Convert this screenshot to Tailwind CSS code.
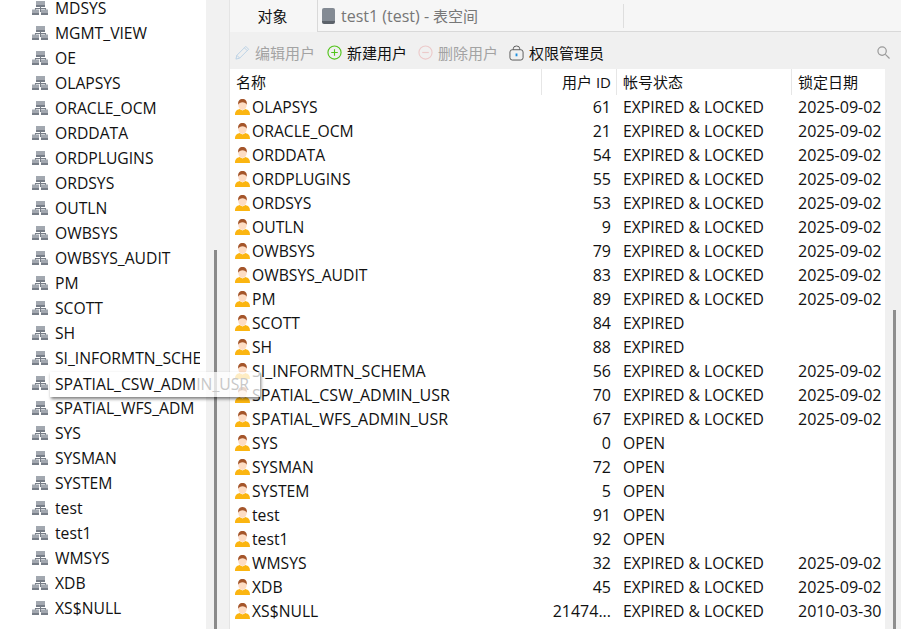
<!DOCTYPE html>
<html><head><meta charset="utf-8"><script src="https://cdn.jsdelivr.net/npm/@tailwindcss/browser@4"></script></head>
<body class="m-0 overflow-hidden">
<svg class="hidden"><defs>
<symbol id="db" viewBox="0 0 16 14"><rect x="4" y="0" width="9" height="3.500" fill="#a2a8b0"/><rect x="4" y="3.500" width="9" height="2.500" fill="#767d87"/><path d="M8.500 6v5M3.500 9V7.500h10V9" fill="none" stroke="#767d87" stroke-width="1.100"/><rect x="0" y="8.500" width="7" height="3" fill="#a2a8b0"/><rect x="0" y="11.500" width="7" height="2.500" fill="#767d87"/><rect x="9" y="8.500" width="7" height="3" fill="#a2a8b0"/><rect x="9" y="11.500" width="7" height="2.500" fill="#767d87"/></symbol>
<symbol id="usr" viewBox="0 0 15 16"><path d="M0 16c0-3.800 1.500-5 4.500-6l3 1.500 3-1.500c3 1 4.500 2.200 4.500 6z" fill="#fbb511"/><ellipse cx="7.500" cy="6" rx="4.200" ry="5" fill="#fddcc4"/><path d="M3.300 5.800C2.500 2 4.800 0 7.500 0s5 2 4.200 5.800C11.200 4 9.500 3.200 7.500 3.200S3.800 4 3.300 5.800z" fill="#a4552a"/></symbol>
</defs></svg>
<div class="relative flex h-[629px] w-[901px] overflow-hidden bg-white text-[15px] leading-[24px] text-[#111] font-['Open_Sans','Noto_Sans_CJK_SC',sans-serif]">
  <aside class="-mt-[5px] flex w-[206px] shrink-0 flex-col bg-white pl-[32px] text-[15.7px]">
    <div class="flex h-[25px] items-center gap-[7px]"><svg class="h-[14px] w-[16px]"><use href="#db"/></svg><span class="w-[145px] overflow-hidden whitespace-nowrap">MDSYS</span></div>
    <div class="flex h-[25px] items-center gap-[7px]"><svg class="h-[14px] w-[16px]"><use href="#db"/></svg><span class="w-[145px] overflow-hidden whitespace-nowrap">MGMT_VIEW</span></div>
    <div class="flex h-[25px] items-center gap-[7px]"><svg class="h-[14px] w-[16px]"><use href="#db"/></svg><span class="w-[145px] overflow-hidden whitespace-nowrap">OE</span></div>
    <div class="flex h-[25px] items-center gap-[7px]"><svg class="h-[14px] w-[16px]"><use href="#db"/></svg><span class="w-[145px] overflow-hidden whitespace-nowrap">OLAPSYS</span></div>
    <div class="flex h-[25px] items-center gap-[7px]"><svg class="h-[14px] w-[16px]"><use href="#db"/></svg><span class="w-[145px] overflow-hidden whitespace-nowrap">ORACLE_OCM</span></div>
    <div class="flex h-[25px] items-center gap-[7px]"><svg class="h-[14px] w-[16px]"><use href="#db"/></svg><span class="w-[145px] overflow-hidden whitespace-nowrap">ORDDATA</span></div>
    <div class="flex h-[25px] items-center gap-[7px]"><svg class="h-[14px] w-[16px]"><use href="#db"/></svg><span class="w-[145px] overflow-hidden whitespace-nowrap">ORDPLUGINS</span></div>
    <div class="flex h-[25px] items-center gap-[7px]"><svg class="h-[14px] w-[16px]"><use href="#db"/></svg><span class="w-[145px] overflow-hidden whitespace-nowrap">ORDSYS</span></div>
    <div class="flex h-[25px] items-center gap-[7px]"><svg class="h-[14px] w-[16px]"><use href="#db"/></svg><span class="w-[145px] overflow-hidden whitespace-nowrap">OUTLN</span></div>
    <div class="flex h-[25px] items-center gap-[7px]"><svg class="h-[14px] w-[16px]"><use href="#db"/></svg><span class="w-[145px] overflow-hidden whitespace-nowrap">OWBSYS</span></div>
    <div class="flex h-[25px] items-center gap-[7px]"><svg class="h-[14px] w-[16px]"><use href="#db"/></svg><span class="w-[145px] overflow-hidden whitespace-nowrap">OWBSYS_AUDIT</span></div>
    <div class="flex h-[25px] items-center gap-[7px]"><svg class="h-[14px] w-[16px]"><use href="#db"/></svg><span class="w-[145px] overflow-hidden whitespace-nowrap">PM</span></div>
    <div class="flex h-[25px] items-center gap-[7px]"><svg class="h-[14px] w-[16px]"><use href="#db"/></svg><span class="w-[145px] overflow-hidden whitespace-nowrap">SCOTT</span></div>
    <div class="flex h-[25px] items-center gap-[7px]"><svg class="h-[14px] w-[16px]"><use href="#db"/></svg><span class="w-[145px] overflow-hidden whitespace-nowrap">SH</span></div>
    <div class="flex h-[25px] items-center gap-[7px]"><svg class="h-[14px] w-[16px]"><use href="#db"/></svg><span class="w-[145px] overflow-hidden whitespace-nowrap">SI_INFORMTN_SCHE</span></div>
    <div class="flex h-[25px] items-center gap-[7px]"><svg class="h-[14px] w-[16px]"><use href="#db"/></svg><span class="w-[145px] overflow-hidden whitespace-nowrap">&nbsp;</span></div>
    <div class="flex h-[25px] items-center gap-[7px]"><svg class="h-[14px] w-[16px]"><use href="#db"/></svg><span class="w-[145px] overflow-hidden whitespace-nowrap">SPATIAL_WFS_ADM</span></div>
    <div class="flex h-[25px] items-center gap-[7px]"><svg class="h-[14px] w-[16px]"><use href="#db"/></svg><span class="w-[145px] overflow-hidden whitespace-nowrap">SYS</span></div>
    <div class="flex h-[25px] items-center gap-[7px]"><svg class="h-[14px] w-[16px]"><use href="#db"/></svg><span class="w-[145px] overflow-hidden whitespace-nowrap">SYSMAN</span></div>
    <div class="flex h-[25px] items-center gap-[7px]"><svg class="h-[14px] w-[16px]"><use href="#db"/></svg><span class="w-[145px] overflow-hidden whitespace-nowrap">SYSTEM</span></div>
    <div class="flex h-[25px] items-center gap-[7px]"><svg class="h-[14px] w-[16px]"><use href="#db"/></svg><span class="w-[145px] overflow-hidden whitespace-nowrap">test</span></div>
    <div class="flex h-[25px] items-center gap-[7px]"><svg class="h-[14px] w-[16px]"><use href="#db"/></svg><span class="w-[145px] overflow-hidden whitespace-nowrap">test1</span></div>
    <div class="flex h-[25px] items-center gap-[7px]"><svg class="h-[14px] w-[16px]"><use href="#db"/></svg><span class="w-[145px] overflow-hidden whitespace-nowrap">WMSYS</span></div>
    <div class="flex h-[25px] items-center gap-[7px]"><svg class="h-[14px] w-[16px]"><use href="#db"/></svg><span class="w-[145px] overflow-hidden whitespace-nowrap">XDB</span></div>
    <div class="flex h-[25px] items-center gap-[7px]"><svg class="h-[14px] w-[16px]"><use href="#db"/></svg><span class="w-[145px] overflow-hidden whitespace-nowrap">XS$NULL</span></div>
  </aside>
  <div class="flex w-[24px] shrink-0 flex-col items-center border-r border-[#e4e4e4] bg-[#f1f1f1] pt-[250px] pr-[4px]"><div class="h-full w-[3px] bg-[#8a8a8a]"></div></div>
  <main class="flex min-w-0 flex-1 flex-col bg-[#f0f0f0]">
    <div class="flex h-[32px] shrink-0 bg-[#f6f6f6]">
      <div class="flex h-[32px] w-[87px] shrink-0 items-center justify-center pr-[2px]">对象</div>
      <div class="flex h-[32px] flex-1 items-center border-b border-l border-[#d9d9d9] text-[#777]">
        <span class="ml-[4px] mr-[6px] h-[16px] w-[13px] rounded-[2px] bg-gradient-to-b from-[#838a93] from-80% to-[#5c626a] to-80%"></span><span class="text-[16px]">test1 (test) - </span><span class="ml-[4px]">表空间</span>
        <span class="ml-[145px] h-[24px] w-px bg-[#dedede]"></span>
      </div>
    </div>
    <div class="flex h-[37px] shrink-0 items-center pl-[5px] pr-[11px] pt-[4px]">
      <span class="flex items-center gap-[5px] text-[#a3a3a3]"><svg class="h-[15px] w-[15px]" viewBox="0 0 16 16" fill="none" stroke="#b9d0e4"><path d="M1 15l1-4L11.500 1.500l3 3L5 14z"/><path d="M2 11l3 3M10 3l3 3"/></svg>编辑用户</span>
      <span class="ml-[12px] flex items-center gap-[5px]"><svg class="h-[15px] w-[15px]" viewBox="0 0 16 16" fill="none" stroke="#52c41a" stroke-width="1.200"><circle cx="8" cy="8" r="7"/><path d="M8 4.500v7M4.500 8h7"/></svg>新建用户</span>
      <span class="ml-[11px] flex items-center gap-[5px] text-[#a3a3a3]"><svg class="h-[15px] w-[15px]" viewBox="0 0 16 16" fill="none" stroke="#eccaca" stroke-width="1.200"><circle cx="8" cy="8" r="7"/><path d="M4.500 8h7"/></svg>删除用户</span>
      <span class="ml-[11px] flex items-center gap-[5px]"><svg class="h-[16px] w-[15px]" viewBox="0 0 16 16" fill="none" stroke="#555"><rect x="1" y="4.500" width="14" height="11" rx="2.500"/><path d="M4.500 4.500V3.500a3.500 3 0 017 0v1"/><path d="M8 8.500v3" stroke="#1e90e0" stroke-width="2"/></svg>权限管理员</span>
      <svg class="ml-auto h-[13px] w-[13px]" viewBox="0 0 14 14" fill="none" stroke="#9a9a9a" stroke-width="1.300"><circle cx="5.500" cy="5.500" r="4.500"/><path d="M9 9l4.500 4.500"/></svg>
    </div>
    <div class="flex min-h-0 flex-1">
      <div class="w-[655px] shrink-0 overflow-hidden bg-white text-[15.7px]">
        <div class="grid h-[26px] grid-cols-[312px_75px_175px_93px] items-center text-[15px]">
          <div class="flex h-[26px] items-center border-r border-[#e6e6e6] pl-[6px]">名称</div>
          <div class="flex h-[26px] items-center justify-end border-r border-[#e6e6e6] pr-[5px]">用户 ID</div>
          <div class="flex h-[26px] items-center border-r border-[#e6e6e6] pl-[6px]">帐号状态</div>
          <div class="flex h-[26px] items-center pl-[6px]">锁定日期</div>
        </div>
        <div class="grid h-[24px] grid-cols-[312px_75px_175px_93px] items-center whitespace-nowrap"><div class="flex items-center gap-[2px] pl-[5px]"><svg class="h-[16px] w-[15px]"><use href="#usr"/></svg>OLAPSYS</div><div class="pr-[6px] text-right text-[16px]">61</div><div class="pl-[6px]">EXPIRED &amp; LOCKED</div><div class="pl-[6px] text-[16px]">2025-09-02</div></div>
        <div class="grid h-[24px] grid-cols-[312px_75px_175px_93px] items-center whitespace-nowrap"><div class="flex items-center gap-[2px] pl-[5px]"><svg class="h-[16px] w-[15px]"><use href="#usr"/></svg>ORACLE_OCM</div><div class="pr-[6px] text-right text-[16px]">21</div><div class="pl-[6px]">EXPIRED &amp; LOCKED</div><div class="pl-[6px] text-[16px]">2025-09-02</div></div>
        <div class="grid h-[24px] grid-cols-[312px_75px_175px_93px] items-center whitespace-nowrap"><div class="flex items-center gap-[2px] pl-[5px]"><svg class="h-[16px] w-[15px]"><use href="#usr"/></svg>ORDDATA</div><div class="pr-[6px] text-right text-[16px]">54</div><div class="pl-[6px]">EXPIRED &amp; LOCKED</div><div class="pl-[6px] text-[16px]">2025-09-02</div></div>
        <div class="grid h-[24px] grid-cols-[312px_75px_175px_93px] items-center whitespace-nowrap"><div class="flex items-center gap-[2px] pl-[5px]"><svg class="h-[16px] w-[15px]"><use href="#usr"/></svg>ORDPLUGINS</div><div class="pr-[6px] text-right text-[16px]">55</div><div class="pl-[6px]">EXPIRED &amp; LOCKED</div><div class="pl-[6px] text-[16px]">2025-09-02</div></div>
        <div class="grid h-[24px] grid-cols-[312px_75px_175px_93px] items-center whitespace-nowrap"><div class="flex items-center gap-[2px] pl-[5px]"><svg class="h-[16px] w-[15px]"><use href="#usr"/></svg>ORDSYS</div><div class="pr-[6px] text-right text-[16px]">53</div><div class="pl-[6px]">EXPIRED &amp; LOCKED</div><div class="pl-[6px] text-[16px]">2025-09-02</div></div>
        <div class="grid h-[24px] grid-cols-[312px_75px_175px_93px] items-center whitespace-nowrap"><div class="flex items-center gap-[2px] pl-[5px]"><svg class="h-[16px] w-[15px]"><use href="#usr"/></svg>OUTLN</div><div class="pr-[6px] text-right text-[16px]">9</div><div class="pl-[6px]">EXPIRED &amp; LOCKED</div><div class="pl-[6px] text-[16px]">2025-09-02</div></div>
        <div class="grid h-[24px] grid-cols-[312px_75px_175px_93px] items-center whitespace-nowrap"><div class="flex items-center gap-[2px] pl-[5px]"><svg class="h-[16px] w-[15px]"><use href="#usr"/></svg>OWBSYS</div><div class="pr-[6px] text-right text-[16px]">79</div><div class="pl-[6px]">EXPIRED &amp; LOCKED</div><div class="pl-[6px] text-[16px]">2025-09-02</div></div>
        <div class="grid h-[24px] grid-cols-[312px_75px_175px_93px] items-center whitespace-nowrap"><div class="flex items-center gap-[2px] pl-[5px]"><svg class="h-[16px] w-[15px]"><use href="#usr"/></svg>OWBSYS_AUDIT</div><div class="pr-[6px] text-right text-[16px]">83</div><div class="pl-[6px]">EXPIRED &amp; LOCKED</div><div class="pl-[6px] text-[16px]">2025-09-02</div></div>
        <div class="grid h-[24px] grid-cols-[312px_75px_175px_93px] items-center whitespace-nowrap"><div class="flex items-center gap-[2px] pl-[5px]"><svg class="h-[16px] w-[15px]"><use href="#usr"/></svg>PM</div><div class="pr-[6px] text-right text-[16px]">89</div><div class="pl-[6px]">EXPIRED &amp; LOCKED</div><div class="pl-[6px] text-[16px]">2025-09-02</div></div>
        <div class="grid h-[24px] grid-cols-[312px_75px_175px_93px] items-center whitespace-nowrap"><div class="flex items-center gap-[2px] pl-[5px]"><svg class="h-[16px] w-[15px]"><use href="#usr"/></svg>SCOTT</div><div class="pr-[6px] text-right text-[16px]">84</div><div class="pl-[6px]">EXPIRED</div><div></div></div>
        <div class="grid h-[24px] grid-cols-[312px_75px_175px_93px] items-center whitespace-nowrap"><div class="flex items-center gap-[2px] pl-[5px]"><svg class="h-[16px] w-[15px]"><use href="#usr"/></svg>SH</div><div class="pr-[6px] text-right text-[16px]">88</div><div class="pl-[6px]">EXPIRED</div><div></div></div>
        <div class="grid h-[24px] grid-cols-[312px_75px_175px_93px] items-center whitespace-nowrap"><div class="flex items-center gap-[2px] pl-[5px]"><svg class="h-[16px] w-[15px]"><use href="#usr"/></svg><span class="text-[16px]">SI_INFORMTN_SCHEMA</span></div><div class="pr-[6px] text-right text-[16px]">56</div><div class="pl-[6px]">EXPIRED &amp; LOCKED</div><div class="pl-[6px] text-[16px]">2025-09-02</div></div>
        <div class="grid h-[24px] grid-cols-[312px_75px_175px_93px] items-center whitespace-nowrap"><div class="flex items-center gap-[2px] pl-[5px]"><svg class="h-[16px] w-[15px]"><use href="#usr"/></svg><span class="text-[16px]">SPATIAL_CSW_ADMIN_USR</span></div><div class="pr-[6px] text-right text-[16px]">70</div><div class="pl-[6px]">EXPIRED &amp; LOCKED</div><div class="pl-[6px] text-[16px]">2025-09-02</div></div>
        <div class="grid h-[24px] grid-cols-[312px_75px_175px_93px] items-center whitespace-nowrap"><div class="flex items-center gap-[2px] pl-[5px]"><svg class="h-[16px] w-[15px]"><use href="#usr"/></svg><span class="text-[16px]">SPATIAL_WFS_ADMIN_USR</span></div><div class="pr-[6px] text-right text-[16px]">67</div><div class="pl-[6px]">EXPIRED &amp; LOCKED</div><div class="pl-[6px] text-[16px]">2025-09-02</div></div>
        <div class="grid h-[24px] grid-cols-[312px_75px_175px_93px] items-center whitespace-nowrap"><div class="flex items-center gap-[2px] pl-[5px]"><svg class="h-[16px] w-[15px]"><use href="#usr"/></svg>SYS</div><div class="pr-[6px] text-right text-[16px]">0</div><div class="pl-[6px]">OPEN</div><div></div></div>
        <div class="grid h-[24px] grid-cols-[312px_75px_175px_93px] items-center whitespace-nowrap"><div class="flex items-center gap-[2px] pl-[5px]"><svg class="h-[16px] w-[15px]"><use href="#usr"/></svg>SYSMAN</div><div class="pr-[6px] text-right text-[16px]">72</div><div class="pl-[6px]">OPEN</div><div></div></div>
        <div class="grid h-[24px] grid-cols-[312px_75px_175px_93px] items-center whitespace-nowrap"><div class="flex items-center gap-[2px] pl-[5px]"><svg class="h-[16px] w-[15px]"><use href="#usr"/></svg>SYSTEM</div><div class="pr-[6px] text-right text-[16px]">5</div><div class="pl-[6px]">OPEN</div><div></div></div>
        <div class="grid h-[24px] grid-cols-[312px_75px_175px_93px] items-center whitespace-nowrap"><div class="flex items-center gap-[2px] pl-[5px]"><svg class="h-[16px] w-[15px]"><use href="#usr"/></svg>test</div><div class="pr-[6px] text-right text-[16px]">91</div><div class="pl-[6px]">OPEN</div><div></div></div>
        <div class="grid h-[24px] grid-cols-[312px_75px_175px_93px] items-center whitespace-nowrap"><div class="flex items-center gap-[2px] pl-[5px]"><svg class="h-[16px] w-[15px]"><use href="#usr"/></svg>test1</div><div class="pr-[6px] text-right text-[16px]">92</div><div class="pl-[6px]">OPEN</div><div></div></div>
        <div class="grid h-[24px] grid-cols-[312px_75px_175px_93px] items-center whitespace-nowrap"><div class="flex items-center gap-[2px] pl-[5px]"><svg class="h-[16px] w-[15px]"><use href="#usr"/></svg>WMSYS</div><div class="pr-[6px] text-right text-[16px]">32</div><div class="pl-[6px]">EXPIRED &amp; LOCKED</div><div class="pl-[6px] text-[16px]">2025-09-02</div></div>
        <div class="grid h-[24px] grid-cols-[312px_75px_175px_93px] items-center whitespace-nowrap"><div class="flex items-center gap-[2px] pl-[5px]"><svg class="h-[16px] w-[15px]"><use href="#usr"/></svg>XDB</div><div class="pr-[6px] text-right text-[16px]">45</div><div class="pl-[6px]">EXPIRED &amp; LOCKED</div><div class="pl-[6px] text-[16px]">2025-09-02</div></div>
        <div class="grid h-[24px] grid-cols-[312px_75px_175px_93px] items-center whitespace-nowrap"><div class="flex items-center gap-[2px] pl-[5px]"><svg class="h-[16px] w-[15px]"><use href="#usr"/></svg>XS$NULL</div><div class="pr-[6px] text-right text-[16px]">21474...</div><div class="pl-[6px]">EXPIRED &amp; LOCKED</div><div class="pl-[6px] text-[16px]">2010-03-30</div></div>
      </div>
      <div class="flex flex-1 justify-end pr-[5px]"><div class="mt-[241px] h-full w-[3px] bg-[#8e8e8e]"></div></div>
    </div>
  </main>
  <div class="absolute left-[50px] top-[372px] flex h-[25px] w-[210px] items-center overflow-hidden bg-white/75 pb-[2px] pl-[5px] text-[15.7px] whitespace-nowrap shadow-[1px_2px_3px_rgba(0,0,0,0.5)]"><span class="text-[#111]">SPATIAL_CSW_ADM</span><span class="text-[#c8c8c8]">IN_USR</span></div>
</div>
</body></html>
